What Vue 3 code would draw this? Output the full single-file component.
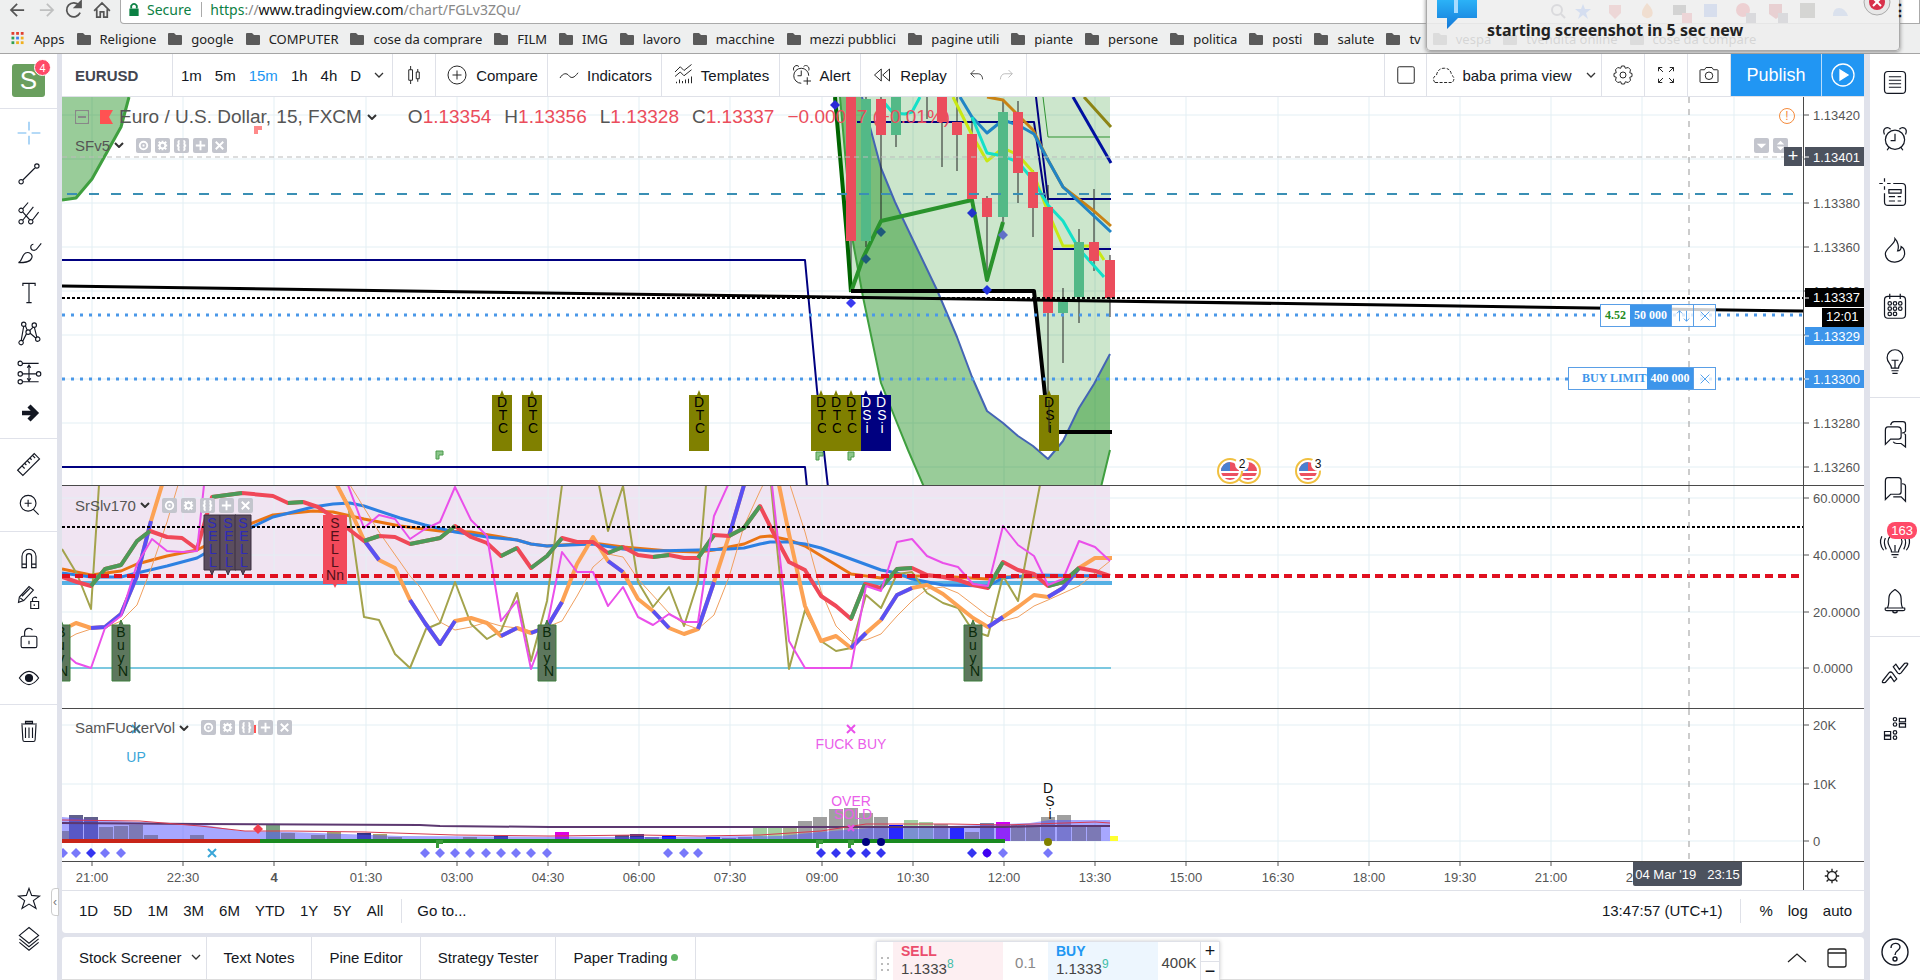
<script setup>
const c = (x, y, r) => `M${x - r} ${y}a${r} ${r} 0 1 0 ${2 * r} 0a${r} ${r} 0 1 0 ${-2 * r} 0`

const icons = {
  back: 'M23 16H8M15 9l-7 7 7 7',
  forward: 'M9 16h15M17 9l7 7-7 7',
  home: 'M7 17l9-9 9 9M10 15v9h4v-6h4v6h4v-9',
  candles: 'M9 9h5v14H9zM11.5 4v5M11.5 23v5M19 12h4v9h-4zM21 8v4M21 21v4',
  compare: c(16, 16, 12) + 'M16 10v12M10 16h12',
  wave: 'M4 20c4-7 9-7 12-3s7 3 12-4',
  templates: 'M4 12l7-7 5 5 10-8M4 18l7-6 5 5 10-8M6 27v-2M10 27v-5M14 27v-3M18 27v-5M22 27v-6M26 27v-9',
  alert: 'M15 27a10 10 0 1 1 10-10M15 10v7h-5M5 10c-2-5 4-9 7-5M25 10c2-5-4-9-7-5M23 19v10M18 24h10',
  replay: 'M15 8v16l-9-8zM26 8v16l-9-8z',
  undo: 'M12 8l-6 6 6 6M6 14h12c4 0 7 4 7 9',
  redo: 'M20 8l6 6-6 6M26 14H14c-4 0-7 4-7 9',
  square: 'M7 5h18a2 2 0 0 1 2 2v18a2 2 0 0 1-2 2H7a2 2 0 0 1-2-2V7a2 2 0 0 1 2-2z',
  gear: 'M14 4h4l1 3 4-1 3 3-1 4 3 1v4l-3 1 1 4-3 3-4-1-1 3h-4l-1-3-4 1-3-3 1-4-3-1v-4l3-1-1-4 3-3 4 1z' + c(16, 16, 4),
  expand: 'M12 12L6 6M6 11V6h5M20 12l6-6M21 6h5v5M12 20l-6 6M6 21v5h5M20 20l6 6M26 21v5h-5',
  camera: 'M5 9h5l2-3h8l2 3h5q1 0 1 1v15q0 1-1 1H5q-1 0-1-1V10q0-1 1-1z' + c(16, 17, 5),
  play: c(16, 16, 11),
  trend: c(7, 26, 2.5) + c(25, 8, 2.5) + 'M9 24L23 10',
  pitchfork: c(7, 13, 2.5) + c(7, 26, 2.5) + c(18, 26, 2.5) + 'M9 11l6-7M9 24L21 9M20 24l7-9M9 15l8 9',
  brush: 'M4 27c5-2 3-8 8-11 4-2 9 2 7 6-2 5-9 5-15 5zM18 9c0 4 5 6 8 1l4-5M18 9c0-2 2-3 3-3',
  text: 'M9 8V5h14v3M16 5v22M13 27h6',
  pattern: c(10, 6, 2.5) + c(22, 7, 2.5) + c(15, 15, 2.5) + c(7, 27, 2.5) + c(26, 23, 2.5) + 'M10 8L7 25M12 8l2 5M21 9l-4 4M13 17l-4 8M17 16l7 6M22 9l3 12',
  forecast: c(6, 5, 2.5) + c(6, 17, 2.5) + c(27, 17, 2.5) + c(6, 26, 2.5) + 'M8 5h19M8 17h17M8 26h19M16 8v15M14 10l2-3 2 3M14 22l2 3 2-3',
  ruler: 'M3 22L22 3l6 6L9 28zM8 17l3 3M11 14l2 2M14 11l3 3M17 8l2 2M20 5l3 3',
  zoom: c(15, 14, 9) + 'M21 21l6 6M15 10v8M11 14h8',
  magnet: 'M8 27V14a8 8 0 0 1 16 0v13h-5V14a3 3 0 0 0-6 0v13zM8 23h5M19 23h5',
  pencil: 'M4 21l1-6L16 3l5 4-11 12zM6 16l4 3M8 14l9-9M18 20h9v8h-9zM20 20v-3a3 3 0 0 1 5-1M22 23v2',
  lock: 'M9 14h14q2 0 2 2v9q0 2-2 2H9q-2 0-2-2v-9q0-2 2-2zM11 14V9a5 5 0 0 1 9-2M16 19v4',
  eye: 'M5 16q11-15 22 0q-11 15-22 0z',
  trash: 'M8 9l1 17q0 2 2 2h10q2 0 2-2l1-17M7 8h18M12 5h8v2h-8zM12 12v12M16 12v12M20 12v12',
  star: 'M16 5l3 8 9 1-7 5 3 9-8-5-8 5 3-9-7-5 9-1z',
  layers: 'M16 4l11 9-11 9-11-9zM5 17l11 9 11-9M5 21l11 9 11-9',
  list: 'M8 4h16q4 0 4 4v17q0 4-4 4H8q-4 0-4-4V8q0-4 4-4zM9 10h14M9 14h14M9 18h14M9 22h14',
  alarm: c(16, 18, 11) + 'M16 11v8h-5M4 12C1 5 7 2 11 6M28 12c3-7-3-10-7-6M9 27l-2 3M23 27l2 3',
  hotlist: 'M14 4h10q4 0 4 4v17q0 4-4 4H8q-4 0-4-4V15M4-2v4M4 7v4M-2 4h4M7 4h4M9 11h14v4H9zM9 19h7M19 19h4M9 24h7M19 24h4',
  fire: 'M16 3c1 6-11 11-11 17 0 14 22 12 22 0 0-4-2-7-4-8 0 3-1 5-4 5 2-5 0-11-3-14z',
  calendar: 'M8 5h16q4 0 4 4v17q0 4-4 4H8q-4 0-4-4V9q0-4 4-4zM10 2v6M22 2v6' + c(10, 13, 2) + c(16, 13, 2) + c(22, 13, 2) + c(10, 19, 2) + c(16, 19, 2) + c(22, 19, 2) + c(10, 25, 2) + c(16, 25, 2),
  bulb: 'M12 23c0-5-5-6-5-12a9 9 0 0 1 18 0c0 6-5 7-5 12zM12 26h8M13 29h6M16 23v-9M12 14h8',
  chats: 'M8 9h11q4 0 4 4v7q0 3-3 3H11l-6 6V13q0-4 3-4zM11 7q1-4 4-4h10q3 0 3 3v8q-1 2-4 2M14 26q1 2 4 2h5l5 4V18q-1-2-4-2',
  chat: 'M8 3h12q3 0 3 3v13q0 3-3 3H11l-6 6V7q0-4 3-4zM14 25h9l5 5V13q0-3-4-3',
  stream: 'M12 24c0-5-4-6-4-12a8 8 0 0 1 16 0c0 6-4 7-4 12zM12 27h8M14 30h4M16 23v-7M5 8c-2 4-1 9 1 13M1 6c-3 6-1 12 2 16M27 8c2 4 1 9-1 13M31 6c3 6 1 12-2 16',
  bell: 'M7 24c2-2 2-6 2-11 0-6 4-8 7-10 3 2 7 4 7 10 0 5 0 9 2 11zM5 24h22q1 3-2 3H7q-3 0-2-3zM13 28q3 3 6 0',
  ideas: 'M2 26l7-9q2-2 4 0l5 7-3 3-4-6-6 7q-5 1-3-2zM30 8l-7 9q-2 2-4 0l-5-7 3-3 4 6 6-7q5-1 3 2z',
  dom: 'M4 20h7v4H4zM4 25h7v4H4zM21 5h7v4h-7zM21 11h7v4h-7z' + c(16, 6, 2) + c(16, 12, 2) + c(16, 21, 2) + c(16, 27, 2),
  help: c(16, 16, 13) + 'M12 12c0-6 9-6 9-1 0 4-5 3-5 8' + c(16, 23, 2),
}

const chips = {
  hide: c(8, 8, 4) + 'M7 8h2',
  settings: c(8, 8, 3) + 'M8 3v2M8 11v2M3 8h2M11 8h2M4 4l2 2M10 10l2 2M12 4l-2 2M6 10l-2 2',
  source: 'M6 3Q4 3 5 6 5 8 3 8q2 0 2 2-1 3 1 3M10 3q2 0 1 3 0 2 2 2-2 0-2 2 1 3-1 3',
  add: 'M8 3v10M3 8h10',
  remove: 'M4 4l8 8M12 4l-8 8',
}

const bookmarks = ['Religione', 'google', 'COMPUTER', 'cose da comprare', 'FILM', 'IMG', 'lavoro', 'macchine', 'mezzi pubblici', 'pagine utili', 'piante', 'persone', 'politica', 'posti', 'salute', 'tv', 'vespa', 'tvendita online', 'cose da compare']
const leftGroups = [['cross', 'trend', 'pitchfork', 'brush', 'text', 'pattern', 'forecast', 'arrow'], ['ruler', 'zoom'], ['magnet', 'pencil', 'lock', 'eye'], ['trash']]
const rightGroups = [['list', 'alarm', 'hotlist', 'fire', 'calendar', 'bulb'], ['chats', 'chat', 'stream', 'bell'], ['ideas', 'dom']]
const ranges = ['1D', '5D', '1M', '3M', '6M', 'YTD', '1Y', '5Y', 'All']
const indicatorLegends = { 1: 'SFv5', 2: 'SrSlv170', 3: 'SamFUckerVol' }

const gridX = Array.from({ length: 19 }, (_, i) => Math.round(92 + i * 91.2))
const hours = ['21:00', '22:30', '4', '01:30', '03:00', '04:30', '06:00', '07:30', '09:00', '10:30', '12:00', '13:30', '15:00', '16:30', '18:00', '19:30', '21:00', '22:30', '']
const gridY = [[115, 159, 203, 247, 291, 335, 379, 423, 467], [499, 556, 613, 669], [725, 784, 841]]

/* x, body top, body bottom, wick top, wick bottom, direction */
const candles = [
  [851, 97, 241, 97, 291, 0], [866, 99, 241, 97, 247, 1], [881, 99, 135, 97, 220, 0], [896, 97, 135, 97, 147, 1], [927, 97, 97, 97, 119, 0],
  [942, 97, 122, 97, 167, 0], [957, 122, 135, 97, 171, 0], [972, 134, 199, 119, 199, 0], [987, 198, 217, 196, 280, 0], [1003, 112, 217, 101, 222, 1],
  [1018, 112, 173, 101, 203, 0], [1033, 172, 208, 170, 237, 0], [1048, 207, 313, 185, 432, 0], [1063, 302, 313, 288, 363, 1], [1079, 242, 297, 229, 323, 1],
  [1094, 242, 261, 189, 271, 0], [1110, 260, 298, 255, 317, 0],
]
const priceDiamonds = [[835, 105, '#2a2ad8'], [866, 259, '#1e5a7a'], [881, 232, '#1e5a7a'], [851, 303, '#3b3bf0'], [972, 213, '#2233cc'], [987, 290, '#2233dd'], [1003, 235, '#6070c8']]
const tags = [[502, 'DTC'], [532, 'DTC'], [699, 'DTC'], [821, 'DTC'], [836, 'DTC'], [866, 'DSi'], [881, 'DSi'], [851, 'DTC'], [1049, 'DSi']]
const tagFill = (x) => (x === 866 || x === 881 ? '#000080' : '#808000')
const tagInk = (x) => (x === 866 || x === 881 ? '#fff' : '#000')

/* Oscillator samples are stored in thirds of a pixel, measured from the section start. */
const at = (x0, list) => {
  const out = []
  for (let i = 0; i < list.length; i += 2) out.push([Math.round(x0 + list[i] / 3), Math.round(480 + list[i + 1] / 3)])
  return out
}
const line = (pts) => pts.map((p) => p.join(',')).join(' ')

const magenta = [
  [...at(0, [186, 515, 228, 553, 274, 566, 316, 447, 364, 410, 410, 255, 455, 181, 502, 217, 545, 219, 592, 217, 612, 18])],
  [...at(0, [1045, 18, 1092, 146, 1138, 108, 1186, 121]), ...at(400, [31, 180, 75, 150, 120, 128, 166, 25, 213, 122, 260, 170, 304, 425, 350, 367, 393, 570, 440, 440, 485, 220, 530, 278, 578, 280, 624, 382, 668, 323, 714, 415, 760, 437, 806, 406, 852, 428, 895, 428, 942, 112, 985, 18])],
  [...at(770, [5, 18, 58, 487, 105, 566, 243, 566, 288, 320, 333, 335, 380, 190, 426, 180, 472, 230, 518, 252, 563, 264, 608, 315, 653, 320, 699, 142, 745, 197, 792, 232, 835, 318, 880, 300, 926, 187, 974, 205, 1020, 245])],
]
const olive = [
  at(0, [186, 210, 230, 285, 274, 390, 297, 18]),
  [...at(0, [1010, 18, 1045, 75, 1092, 415, 1138, 422, 1186, 525, 1230, 566]), ...at(400, [31, 566, 78, 450, 120, 432, 166, 308, 213, 435, 260, 480, 304, 455, 350, 342, 393, 545, 440, 365, 485, 18])],
  at(400, [598, 18, 624, 155, 668, 20, 714, 310, 760, 385, 806, 325, 852, 440, 895, 310, 917, 18]),
  at(770, [2, 18, 58, 570, 105, 392, 152, 485, 198, 517, 243, 508, 288, 347, 333, 388, 380, 285, 426, 278, 472, 342, 518, 372, 563, 388, 608, 455, 653, 470, 699, 292, 745, 365, 810, 18]),
]
const thin = [
  at(0, [186, 490, 228, 465, 274, 450, 316, 448, 364, 425, 410, 378, 455, 260, 500, 130, 535, 18]),
  [...at(0, [1050, 18, 1138, 160, 1230, 290]), ...at(400, [60, 325, 120, 430, 166, 452, 213, 445, 260, 428, 304, 440, 350, 448, 393, 455, 440, 445, 485, 425, 530, 350, 578, 265, 624, 225, 668, 233, 714, 300, 806, 402, 852, 435, 895, 450, 942, 408, 987, 295, 1033, 140, 1080, 35, 1090, 18])],
  at(770, [60, 18, 105, 160, 152, 335, 198, 442, 243, 487, 288, 482, 333, 465, 380, 410, 426, 365, 472, 330, 518, 325, 563, 343, 653, 412, 699, 425, 745, 415, 792, 382, 835, 362, 926, 320, 1020, 245]),
]
const orangeAvg = [...at(0, [186, 270, 274, 288, 364, 277, 410, 255, 500, 230, 592, 213, 727, 145, 820, 108, 940, 97, 1000, 98, 1092, 120, 1200, 142]), ...at(400, [120, 155, 213, 160, 304, 175, 350, 182, 393, 195, 440, 202, 578, 192, 668, 203, 806, 215, 895, 220, 942, 212, 987, 205, 1033, 195, 1080, 175]), ...at(770, [0, 172, 58, 182, 105, 200, 243, 285, 333, 298, 380, 290, 500, 290, 653, 300, 699, 295, 1020, 290])]
const blueAvg = [...at(0, [186, 283, 274, 295, 364, 293, 410, 283, 500, 260, 592, 236, 727, 160, 820, 115, 940, 85, 1000, 76, 1050, 72, 1092, 80]), ...at(400, [0, 118, 75, 138, 166, 158, 260, 175, 350, 183, 393, 195, 440, 202, 578, 196, 668, 210, 760, 215, 895, 213, 987, 210, 1033, 208, 1080, 194]), ...at(770, [0, 190, 58, 190, 105, 195, 152, 207, 333, 272, 380, 283, 426, 300, 518, 318, 653, 322, 699, 297, 792, 287, 1020, 292])]

const fast = [
  at(0, [210, 440, 228, 432, 274, 448, 316, 444, 364, 405, 410, 290, 453, 125, 487, 18]),
  [...at(0, [1012, 18, 1055, 105, 1092, 183, 1138, 243, 1186, 268]), ...at(400, [31, 362, 75, 432, 120, 495, 166, 425, 213, 418, 260, 432, 304, 471, 350, 448, 393, 463, 440, 445, 485, 368, 530, 255, 578, 175, 624, 246, 668, 280, 714, 360, 760, 395, 806, 448, 852, 465, 895, 450, 942, 308, 987, 170, 1033, 18])],
  at(770, [28, 18, 58, 165, 105, 380, 152, 485, 198, 472, 243, 508, 288, 462, 333, 422, 380, 348, 426, 326, 472, 318, 518, 345, 563, 380, 608, 417, 653, 445, 699, 415, 745, 385, 792, 347, 835, 355, 880, 328, 926, 268, 974, 237, 1025, 237]),
]
const fastBlue = [
  fast[0].slice(2, 7), fast[1].slice(2, 4), fast[1].slice(5, 9), fast[1].slice(11, 13), fast[1].slice(13, 16), fast[1].slice(18, 20), fast[1].slice(21, 23), fast[1].slice(24, 26), fast[1].slice(26),
  fast[2].slice(5, 7), fast[2].slice(7, 10), fast[2].slice(14, 16), fast[2].slice(18, 21),
]
const rsi = [...at(0, [186, 293, 230, 308, 274, 320, 316, 270, 364, 257, 410, 187, 450, 155, 502, 175, 545, 178, 592, 210, 635, 55, 727, 42, 820, 52, 865, 72, 910, 68, 955, 85, 1000, 115, 1092, 185, 1138, 171, 1186, 173]), ...at(400, [31, 194, 120, 178, 166, 142, 213, 175, 260, 192, 304, 231, 350, 206, 393, 268, 440, 230, 485, 177, 530, 190, 578, 190, 624, 221, 668, 203, 714, 227, 760, 235, 806, 227, 852, 237, 895, 238, 942, 167, 987, 170, 1033, 148, 1080, 80]), ...at(770, [12, 165, 58, 250, 105, 272, 152, 352, 198, 382, 243, 420, 286, 315, 333, 328, 380, 270, 426, 266, 472, 287, 518, 295, 563, 303, 608, 318, 653, 327, 699, 248, 745, 272, 792, 285, 835, 320, 880, 310, 926, 267, 974, 275, 1020, 290])]
const rsiUp = [[2, 6], [10, 11], [13, 14], [17, 18], [20, 22], [25, 26], [27, 29], [32, 33], [35, 36], [38, 39], [40, 42], [48, 49], [50, 52], [57, 58], [61, 63]].map(([a, b]) => rsi.slice(a, b + 1))

/* left edge, top, fill */
const K = '#a8a36a', G = '#a0a0a0', V = '#8a8aa8', B = '#0000ff', L = '#a5d0a0'
const volume = [
  [55, 831, K], [69, 815, '#60608c'], [84, 817, '#60608c'], [99, 827, K], [114, 826, K], [129, 825, K], [144, 835, K], [190, 835, K], [266, 825, '#78a080'], [281, 833, K], [311, 835, K], [327, 832, K],
  [357, 833, '#303080'], [373, 834, K], [388, 837, K], [463, 837, K], [494, 836, '#303080'], [555, 832, '#e000e0'], [615, 835, '#505080'], [630, 834, '#303090'], [645, 837, V], [662, 836, B], [706, 837, B], [722, 838, V], [738, 837, V],
  [753, 828, L], [768, 827, L], [783, 827, '#a8b890'], [798, 821, G], [813, 817, G], [829, 809, G], [844, 808, G], [859, 813, G], [874, 817, G], [889, 825, B], [904, 820, L], [919, 822, L], [934, 824, G], [950, 826, B],
  [965, 832, K], [980, 823, '#8080a0'], [996, 822, '#d000f0'], [1011, 825, K], [1026, 825, K], [1041, 817, G], [1057, 815, G], [1072, 826, K], [1087, 827, K],
]
const faintMarks = [63, 76, 105, 121, 425, 440, 455, 470, 486, 501, 516, 531, 547, 668, 684, 698, 1003, 1048]
const strongMarks = [91, 821, 836, 851, 866, 881, 972, 987]
const diamond = (x, y) => `M${x} ${y - 5}l5 5-5 5-5-5z`
</script>

<template>
  <div class="app">
    <header class="browser">
      <div class="address">
        <button v-for="n in ['back', 'forward']" :key="n" class="nav" :class="n" :aria-label="n"><svg viewBox="0 0 32 32"><path :d="icons[n]" /></svg></button>
        <button class="nav" aria-label="reload"><svg viewBox="0 0 32 32"><path d="M23 19a8 8 0 1 1-1-8" /><path d="M24 6v7h-7z" class="solid" /></svg></button>
        <button class="nav" aria-label="home"><svg viewBox="0 0 32 32"><path :d="icons.home" /></svg></button>
        <div class="url">
          <svg class="padlock" viewBox="0 0 10 14"><path d="M0 6h10v8H0z" fill="#0b8043" /><path d="M2 6V3q3-4 6 0v3" fill="none" stroke="#0b8043" stroke-width="2" /></svg>
          <span class="secure">Secure</span>
          <a href="#" class="link"><span class="green">https</span><span>://</span><b>www.tradingview.com</b><span>/chart/FGLv3ZQu/</span></a>
        </div>
      </div>
      <nav class="bookmarks">
        <a href="#" class="mark"><svg class="apps" viewBox="0 0 14 14"><g v-for="(row, i) in [['#e04030', '#e04030', '#e04030'], ['#30a050', '#4080f0', '#f0b020'], ['#30a050', '#f0b020', '#f0b020']]" :key="i"><rect v-for="(f, j) in row" :key="j" :x="j * 5" :y="i * 5" width="3" height="3" :fill="f" /></g></svg>Apps</a>
        <a v-for="b in bookmarks" :key="b" href="#" class="mark"><svg viewBox="0 0 14 12"><path d="M0 1q0-1 1-1h5l2 2h5q1 0 1 1v8q0 1-1 1H1q-1 0-1-1z" fill="#5a5a5a" /></svg>{{ b }}</a>
      </nav>
      <div class="notice">
        <svg class="ghost" viewBox="0 0 340 24">
          <g fill="none" stroke="#667" stroke-width="2"><circle cx="10" cy="9" r="5" /><path d="M14 13l4 4" /></g>
          <path d="M36 3l2 5h6l-5 4 2 6-5-4-5 4 2-6-5-4h6z" fill="#4080f0" />
          <path d="M62 4h12v8l-6 6-6-6z" fill="#e05050" /><path d="M100 2q8 8 5 13-6 5-10-1-1-5 5-12z" fill="#f08020" />
          <rect x="126" y="4" width="13" height="10" fill="#333" /><rect x="135" y="12" width="10" height="10" fill="#e04050" />
          <rect x="157" y="3" width="13" height="13" fill="#5080e0" /><circle cx="196" cy="9" r="7" fill="#e02030" /><rect x="199" y="12" width="10" height="10" fill="#667" />
          <path d="M222 3h13v10l-6 5-7-5z" fill="#c02030" /><rect x="231" y="12" width="10" height="10" fill="#667" />
          <rect x="253" y="2" width="15" height="15" fill="#443" /><path d="M286 15q0-8 6-8t9 8z" fill="#6090e0" />
        </svg>
        <svg class="bubble" viewBox="0 0 40 30"><defs><linearGradient id="bub" x2="0" y2="1"><stop stop-color="#2bb2f7" /><stop offset="1" stop-color="#1478d8" /></linearGradient></defs><path d="M0 0h40v18H21L10 29V18H0z" fill="url(#bub)" /><path d="M17 0h4v13h-4z" fill="#a8dcff" /></svg>
        <strong>starting screenshot in 5 sec new</strong>
        <svg class="dismiss" viewBox="0 0 28 16"><circle cx="14" cy="2" r="13" fill="#e8e8e8" stroke="#aaa" /><circle cx="14" cy="2" r="8" fill="#d8304a" /><path d="M10-2l8 8M18-2l-8 8" stroke="#fff" stroke-width="2" /></svg>
      </div>
      <span class="kebab">⋮</span>
    </header>

    <div class="body">
      <aside class="tools">
        <button class="avatar" aria-label="Profile">S<span class="badge">4</span></button>
        <div v-for="(g, i) in leftGroups" :key="i" class="group">
          <button v-for="n in g" :key="n" class="tool" :aria-label="n">
            <svg v-if="n === 'cross'" viewBox="0 0 32 32"><path d="M16 3v10M16 19v10M3 16h10M19 16h10" stroke="#6db6f0" /></svg>
            <svg v-else-if="n === 'arrow'" viewBox="0 0 32 32"><path d="M8 16h14M16 8l8 8-8 8" class="heavy" /></svg>
            <svg v-else viewBox="0 0 32 32"><path :d="icons[n]" /><circle v-if="n === 'eye'" cx="16" cy="16" r="4" fill="#131722" /></svg>
          </button>
        </div>
        <div class="group last">
          <button class="tool" aria-label="star"><svg viewBox="0 0 32 32"><path :d="icons.star" /></svg></button>
          <button class="tool" aria-label="layers"><svg viewBox="0 0 32 32"><path :d="icons.layers" /></svg></button>
        </div>
        <button class="fold" aria-label="Hide toolbar">‹</button>
      </aside>

      <main class="center">
        <div class="toolbar">
          <div class="cell symbol"><button class="sym">EURUSD</button></div>
          <div class="cell intervals">
            <button v-for="t in ['1m', '5m', '15m', '1h', '4h', 'D']" :key="t" :class="{ active: t === '15m' }">{{ t }}</button>
            <button aria-label="More"><svg class="chev" viewBox="0 0 10 6"><path d="M1 1l4 4 4-4" /></svg></button>
          </div>
          <button class="cell slim" aria-label="Candles"><svg viewBox="0 0 32 32"><path :d="icons.candles" /></svg></button>
          <button class="cell compare"><svg viewBox="0 0 32 32"><path :d="icons.compare" /></svg>Compare</button>
          <button class="cell indicators"><svg viewBox="0 0 32 32"><path :d="icons.wave" /></svg>Indicators</button>
          <button class="cell templates"><svg viewBox="0 0 32 32"><path :d="icons.templates" /></svg>Templates</button>
          <button class="cell alert"><svg viewBox="0 0 32 32"><path :d="icons.alert" /></svg>Alert</button>
          <button class="cell replay"><svg viewBox="0 0 32 32"><path :d="icons.replay" /></svg>Replay</button>
          <div class="cell history"><button aria-label="Undo"><svg viewBox="0 0 32 32"><path :d="icons.undo" /></svg></button><button aria-label="Redo" class="off"><svg viewBox="0 0 32 32"><path :d="icons.redo" /></svg></button></div>
          <span class="grow"></span>
          <button class="cell slim" aria-label="Layout"><svg viewBox="0 0 32 32"><path :d="icons.square" /></svg></button>
          <button class="cell view"><svg viewBox="0 0 32 32"><path d="M4 26q-5-6 2-10 2-9 10-9 9 0 10 9 6 4 1 10z" stroke-dasharray="4 2" /></svg>baba prima view<svg class="chev" viewBox="0 0 10 6"><path d="M1 1l4 4 4-4" /></svg></button>
          <button v-for="n in ['gear', 'expand', 'camera']" :key="n" class="cell slim" :aria-label="n"><svg viewBox="0 0 32 32"><path :d="icons[n]" /></svg></button>
          <button class="publish">Publish</button>
          <button class="go" aria-label="Play"><svg viewBox="0 0 32 32"><path :d="icons.play" /><path d="M13 11l8 5-8 5z" class="fill" /></svg></button>
        </div>

        <section class="pane p1">
          <svg class="plot">
            <g transform="translate(-62 -97)">
              <g class="grid"><path v-for="x in gridX" :key="x" :d="`M${x} 97V490`" /><path v-for="y in gridY[0]" :key="y" :d="`M62 ${y}H4000`" /></g>
              <path d="M62 97H129L121 127 92 179 76 198 62 200z" fill="rgba(0,128,0,.4)" />
              <path d="M129 97L121 127 92 179 76 198 62 200" class="ln" stroke="#3f9f3f" stroke-width="3" />
              <path d="M835 97L851 291H1034L1048 432H1110V97z" fill="rgba(0,128,0,.2)" />
              <path d="M862 97L870 127 881 168 895 202 902 217 913 240 937 290 957 337 972 377 987 411 1003 423 1018 436 1033 446 1048 459 1063 441 1079 408 1094 384 1110 354V450L1101 487H924L908 450 895 418 881 383 863 297 853 242 840 97z" fill="rgba(0,128,0,.4)" />
              <g class="ln">
                <path d="M862 97L870 127 881 168 895 202 902 217 913 240 937 290 957 337 972 377 987 411 1003 423 1018 436 1033 446 1048 459 1063 441 1079 408 1094 384 1110 354" stroke="#4464b4" stroke-width="2" />
                <path d="M840 97L853 242 863 297 881 383 895 418 908 450 924 487M1101 487L1110 450" stroke="#3f9f3f" stroke-width="2" />
                <path d="M62 260H805L817 390 828 487M62 467H805L807 487M857 122H1034L1046 205M1036 97L1048 199H1111M1048 249H1111" stroke="#000080" stroke-width="2" />
                <path d="M1043 97L1048 137H1110" stroke="#2e9330" />
                <path d="M1073 97L1111 163" stroke="#0010a0" stroke-width="3" /><path d="M1084 97L1111 127" stroke="#8c8414" stroke-width="3" />
              </g>
              <path v-for="k in candles" :key="k[0]" :d="`M${k[0]} ${k[3]}V${k[4]}`" stroke="#222" />
              <g class="ln" stroke-width="3">
                <path d="M987 97L1003 100 1033 130 1048 160 1063 187 1094 211 1111 226" stroke="#c88214" />
                <path d="M960 97L972 117 987 133 1003 120 1018 125 1034 134 1048 160 1063 187 1111 232" stroke="#2185c5" />
                <path d="M953 97L972 135 987 161 1003 148 1018 155 1033 172 1048 212 1063 246 1095 246 1104 260" stroke="#c8e814" />
                <path d="M882 100L893 113 905 114 912 112 920 97M972 117L987 153 1003 156 1018 162 1033 180 1048 205 1063 221 1079 249 1104 277" stroke="#14e0c8" />
                <path d="M835 97L847 237 851 292" stroke="#006400" stroke-width="4" />
                <path d="M851 292L863 258 881 221 972 200 987 280 1003 222" stroke="#2a932c" stroke-width="4" />
                <path d="M851 291H1034L1045 395M1058 432H1112" stroke="#000" stroke-width="4" />
              </g>
              <rect v-for="k in candles" :key="k[0]" :x="k[0] - 5" :y="k[1]" width="10" :height="k[2] - k[1]" :fill="k[5] ? '#53b987' : '#eb4d5c'" />
              <path v-for="d in priceDiamonds" :key="d[0]" :d="diamond(d[0], d[1])" :fill="d[2]" />
              <path d="M62 286L1803 311" class="ln" stroke="#000" stroke-width="3" />
              <path d="M62 298H4000" stroke="#000" stroke-width="2" stroke-dasharray="3 2" />
              <path d="M62 315H4000M62 379H4000" stroke="#4a98e8" stroke-width="3" stroke-dasharray="3 6" />
              <path d="M67 194H1795" stroke="#3a8fb4" stroke-width="2" stroke-dasharray="10 12" />
              <path d="M62 157H4000" stroke="#bbb" stroke-dasharray="5 4" />
              <path d="M1689 97V490" stroke="#999" stroke-dasharray="6 6" />
              <g v-for="t in tags" :key="t[0]" :fill="tagInk(t[0])" class="glyphs">
                <path :d="`M${t[0] - 10} 395h8l2-5 2 5h8v56h-20z`" :fill="tagFill(t[0])" />
                <text v-for="(ch, i) in t[1]" :key="i" :x="t[0] + (i ? 1 : 0)" :y="407 + i * 13">{{ ch }}</text>
              </g>
              <path d="M1049 400V432" stroke="#222" />
              <g fill="#8cc68c" stroke="#4a9a4a"><path d="M436 451h7v4h-4v4h-3zM816 452h7v4h-4v4h-3zM848 452h6v5h-3v3h-3z" /></g>
              <path d="M254 126h8v4h-4v4h-4z" fill="#ff8a8a" />
              <g v-for="f in [1248, 1230, 1308]" :key="f">
                <circle :cx="f" cy="471" r="12" fill="#fff" stroke="#f0c040" stroke-width="2" /><circle :cx="f" cy="471" r="9" fill="#ec5060" /><path :d="`M${f - 9} 472h18M${f - 7} 477h14`" stroke="#fff" stroke-width="2" /><path :d="`M${f - 9} 471a9 9 0 0 1 9-9v9z`" fill="#4a80d0" />
              </g>
              <g class="count"><circle cx="1242" cy="464" r="7" fill="#fff" /><circle cx="1318" cy="464" r="7" fill="#fff" /><text x="1242" y="468">2</text><text x="1318" y="468">3</text></g>
            </g>
          </svg>
          <div class="quote">
            <svg class="box" viewBox="0 0 14 14"><rect x="0" y="0" width="14" height="14" rx="2" fill="none" stroke="#888" stroke-width="2" /><path d="M3 7h8" stroke="#888" stroke-width="2" /></svg>
            <svg class="flag" viewBox="0 0 13 14"><path d="M0 0h13l-4 7 4 7H0z" fill="#ff5252" /></svg>
            <span>Euro / U.S. Dollar, 15, FXCM</span>
            <svg class="chev" viewBox="0 0 10 6"><path d="M1 1l4 4 4-4" stroke-width="2" /></svg>
            <span class="ohlc">O<i>1.13354</i></span><span class="ohlc">H<i>1.13356</i></span><span class="ohlc">L<i>1.13328</i></span><span class="ohlc">C<i>1.13337</i></span><span class="ohlc"><i>−0.00017 (−0.01%)</i></span>
          </div>
          <div class="study first">
            <span>{{ indicatorLegends[1] }}</span><svg class="chev" viewBox="0 0 10 6"><path d="M1 1l4 4 4-4" stroke-width="2" /></svg>
            <div class="chips"><button v-for="(d, n) in chips" :key="n" :aria-label="n"><svg viewBox="0 0 16 16"><path :d="d" /></svg></button></div>
          </div>
          <div class="chips side"><button aria-label="Move"><svg viewBox="0 0 16 16"><path d="M3 6h10l-5 5z" class="full" /></svg></button><button aria-label="Resize"><svg viewBox="0 0 16 16"><path d="M4 7l4-4 4 4zM4 9l4 4 4-4z" class="full" /></svg></button></div>
          <span class="warn">!</span><span class="plus">+</span>
          <div class="order one"><span class="gain">4.52</span><b>50 000</b><button aria-label="Reverse"><svg viewBox="0 0 16 16"><path d="M4 14V2M1 5l3-3 3 3M12 2v12M9 11l3 3 3-3" /></svg></button><button aria-label="Close"><svg viewBox="0 0 16 16"><path d="M3 3l10 10M13 3L3 13" /></svg></button></div>
          <div class="order two"><span class="kind">BUY LIMIT</span><b>400 000</b><button aria-label="Cancel"><svg viewBox="0 0 16 16"><path d="M3 3l10 10M13 3L3 13" /></svg></button></div>
          <svg class="axis">
            <g transform="translate(-1803 -97)">
              <path v-for="y in gridY[0]" :key="y" :d="`M1803 ${y}h5`" stroke="#555" />
              <text v-for="(y, i) in gridY[0]" v-show="![1, 5, 6].includes(i)" :key="y" x="1812" :y="y + 5">{{ (1.1342 - i * 0.0002).toFixed(5) }}</text>
              <path d="M1804 147h59v19h-59z" fill="#4c525e" /><path d="M1804 288h59v19h-59zM1821 308h42v19h-42z" fill="#000" /><path d="M1804 327h59v18h-59zM1804 370h59v18h-59z" fill="#3d95ea" />
              <path d="M1804 157h4M1804 298h4M1804 336h4M1804 379h4" stroke="#fff" />
              <g class="inv"><text x="1812" y="162">1.13401</text><text x="1812" y="302">1.13337</text><text x="1825" y="321">12:01</text><text x="1812" y="341">1.13329</text><text x="1812" y="384">1.13300</text></g>
            </g>
          </svg>
        </section>

        <section class="pane p2">
          <svg class="plot">
            <g transform="translate(-62 -487)">
              <path d="M62 487H1110V584H62z" fill="#f0e4f2" />
              <g class="grid"><path v-for="x in gridX" :key="x" :d="`M${x} 487V710`" /><path v-for="y in gridY[1]" :key="y" :d="`M62 ${y}H4000`" /></g>
              <path d="M62 584H1112" stroke="#55b0e4" stroke-width="4" /><path d="M62 669H1111" stroke="#7cc8e0" stroke-width="2" />
              <g class="ln">
                <polyline :points="line(orangeAvg)" stroke="#ea7414" stroke-width="3" /><polyline :points="line(blueAvg)" stroke="#2e80e2" stroke-width="3" />
                <polyline v-for="(s, i) in thin" :key="i" :points="line(s)" stroke="#f0a060" />
                <polyline v-for="(s, i) in olive" :key="i" :points="line(s)" stroke="#a3a34c" stroke-width="2" />
                <polyline v-for="(s, i) in fast" :key="i" :points="line(s)" stroke="#fca254" stroke-width="4" />
                <polyline v-for="(s, i) in fastBlue" :key="i" :points="line(s)" stroke="#5a50f4" stroke-width="4" />
                <polyline :points="line(rsi)" stroke="#f04858" stroke-width="4" /><polyline v-for="(s, i) in rsiUp" :key="i" :points="line(s)" stroke="#4c9a58" stroke-width="4" />
                <polyline v-for="(s, i) in magenta" :key="i" :points="line(s)" stroke="#ea50ea" stroke-width="2" />
              </g>
              <path d="M62 528H4000" stroke="#000" stroke-width="2" stroke-dasharray="3 2" />
              <path d="M62 577H4000" stroke="#e01020" stroke-width="4" stroke-dasharray="8 5" />
              <path d="M1689 487V710" stroke="#999" stroke-dasharray="6 6" />
              <g v-for="x in [212, 228, 243]" :key="x" class="glyphs" fill="#2e2ab8"><path :d="`M${x - 8} 516h16v55h-6l-2 5-2-5h-6z`" fill="#5b4d5f" stroke="#3c3040" /><text v-for="(ch, i) in 'SELL'" :key="i" :x="x + (i ? 1 : 0)" :y="529 + i * 13">{{ ch }}</text></g>
              <g class="glyphs" fill="#501018"><path d="M323 516h24v69h-10l-2 4-2-4h-10z" fill="#f2495a" /><text v-for="(ch, i) in ['S', 'E', 'L', 'L', 'Nn']" :key="i" x="335" :y="529 + i * 13">{{ ch }}</text></g>
              <g v-for="x in [61, 121, 547, 973]" :key="x" class="glyphs" fill="#0a2a0a"><path :d="`M${x - 9} 626h7l2-5 2 5h7v56h-18z`" fill="#5d775d" stroke="#3c7f3c" /><text v-for="(ch, i) in 'BuyN'" :key="i" :x="x + (i === 3 ? 2 : 0)" :y="638 + i * 13">{{ ch }}</text></g>
            </g>
          </svg>
          <div class="study"><span>{{ indicatorLegends[2] }}</span><svg class="chev" viewBox="0 0 10 6"><path d="M1 1l4 4 4-4" stroke-width="2" /></svg><div class="chips"><button v-for="(d, n) in chips" :key="n" :aria-label="n"><svg viewBox="0 0 16 16"><path :d="d" /></svg></button></div></div>
          <svg class="axis"><g transform="translate(-1803 -487)"><path v-for="y in gridY[1]" :key="y" :d="`M1803 ${y}h5`" stroke="#555" /><text v-for="(y, i) in gridY[1]" :key="y" x="1812" :y="y + 5">{{ (60 - i * 20).toFixed(4) }}</text></g></svg>
        </section>

        <section class="pane p3">
          <svg class="plot">
            <g transform="translate(-62 -709)">
              <g class="grid"><path v-for="x in gridX" :key="x" :d="`M${x} 709V865`" /><path v-for="y in gridY[2]" :key="y" :d="`M62 ${y}H4000`" /></g>
              <rect v-for="v in volume" :key="v[0]" :x="v[0]" :y="v[1]" width="14" :height="841 - v[1]" :fill="v[2]" />
              <path d="M62 817L97 820 205 825 240 831 290 832 400 836 640 837 780 836 820 832 870 828 950 826 1030 823 1050 820H1110V841H62z" fill="rgba(80,80,255,.5)" />
              <rect x="1110" y="836" width="8" height="5" fill="#ffff30" />
              <g class="ln">
                <path d="M62 823L200 824 420 825 440 826 550 827 690 827 900 827 1004 827 1040 826 1110 826" stroke="#5c3870" stroke-width="2" />
                <path d="M62 820L140 821 200 826 245 831 290 831 365 832 455 835 550 836 640 835 700 836 760 835 821 831 866 824 950 824 1004 825 1095 822 1110 823" stroke="#d83a50" />
                <path d="M62 841H260" stroke="#c82418" stroke-width="4" /><path d="M260 841H1005" stroke="#1a8a20" stroke-width="4" />
              </g>
              <path v-for="x in faintMarks" :key="x" :d="diamond(x, 853)" fill="#7878fa" /><path v-for="x in strongMarks" :key="x" :d="diamond(x, 853)" fill="#3434f0" />
              <circle cx="987" cy="853" r="4" fill="#4000f0" /><circle cx="866" cy="842" r="4" fill="#000080" /><circle cx="881" cy="842" r="4" fill="#000080" /><circle cx="1048" cy="842" r="4" fill="#808000" />
              <path :d="diamond(258, 829)" fill="#f04050" /><path d="M436 840h7v4h-4v4h-3zM816 840h7v4h-4v4h-3zM848 840h6v5h-3v3h-3z" fill="#3a9a3a" />
              <g class="ln" stroke-width="2"><path d="M208 849l8 8M216 849l-8 8M132 725l8 8M140 725l-8 8" stroke="#3aa6d8" /><path d="M847 725l8 8M855 725l-8 8M848 825l6 6M854 825l-6 6" stroke="#ea50ea" /></g>
              <path d="M255 725v8" stroke="#ff5252" stroke-width="2" />
              <path d="M1689 709V865" stroke="#999" stroke-dasharray="6 6" />
              <g class="glyphs"><text x="136" y="762" fill="#3aa6d8">UP</text><g fill="#ea60ea"><text x="851" y="749">FUCK BUY</text><text x="851" y="806">OVER</text><text x="853" y="819">SOLD</text></g><g fill="#111"><text x="1048" y="793">D</text><text x="1050" y="806">S</text><text x="1050" y="819">i</text></g></g>
            </g>
          </svg>
          <div class="study"><span>{{ indicatorLegends[3] }}</span><svg class="chev" viewBox="0 0 10 6"><path d="M1 1l4 4 4-4" stroke-width="2" /></svg><div class="chips"><button v-for="(d, n) in chips" :key="n" :aria-label="n"><svg viewBox="0 0 16 16"><path :d="d" /></svg></button></div></div>
          <svg class="axis"><g transform="translate(-1803 -709)"><path v-for="y in gridY[2]" :key="y" :d="`M1803 ${y}h5`" stroke="#555" /><text v-for="(y, i) in gridY[2]" :key="y" x="1812" :y="y + 5">{{ ['20K', '10K', '0'][i] }}</text></g></svg>
        </section>

        <div class="time">
          <svg class="plot"><g transform="translate(-62 -862)"><g v-for="(x, i) in gridX" :key="x" class="hour"><path v-if="hours[i]" :d="`M${x} 862v4`" stroke="#555" /><text :x="x" y="882" :class="{ strong: hours[i] === '4' }">{{ hours[i] }}</text></g></g></svg>
          <span class="stamp">04 Mar '19&nbsp;&nbsp; 23:15</span>
          <button class="corner" aria-label="Axis settings"><svg viewBox="0 0 20 20"><circle cx="10" cy="10" r="5" /><path d="M10 2v3M10 15v3M2 10h3M15 10h3M4 4l3 3M13 13l3 3M16 4l-3 3M7 13l-3 3" /></svg></button>
        </div>

        <div class="ranges">
          <button v-for="r in ranges" :key="r">{{ r }}</button><span class="bar"></span><button>Go to...</button>
          <span class="grow"></span><span>13:47:57 (UTC+1)</span><span class="bar end"></span><button>%</button><button>log</button><button>auto</button>
        </div>

        <footer class="tabs">
          <button class="screener">Stock Screener<svg class="chev" viewBox="0 0 10 6"><path d="M1 1l4 4 4-4" /></svg></button><button>Text Notes</button><button>Pine Editor</button><button>Strategy Tester</button><button>Paper Trading<i class="dot"></i></button>
          <span class="grow"></span>
          <button class="ico" aria-label="Open panel"><svg viewBox="0 0 20 20"><path d="M1 14l9-8 9 8" /></svg></button><button class="ico" aria-label="Maximize"><svg viewBox="0 0 20 20"><path d="M3 1h14q2 0 2 2v14q0 2-2 2H3q-2 0-2-2V3q0-2 2-2zM1 5h18" /></svg></button>
          <div class="trade">
            <svg class="grip" viewBox="0 0 16 38"><path v-for="y in [16, 22, 28]" :key="y" :d="`M4 ${y}h2M10 ${y}h2`" stroke="#bbb" stroke-width="2" /></svg>
            <button class="sell"><b>SELL</b><span>1.1333<sup>8</sup></span></button>
            <span class="spread">0.1</span>
            <button class="buy"><b>BUY</b><span>1.1333<sup>9</sup></span></button>
            <input aria-label="Quantity" value="400K" />
            <div class="step"><button>+</button><button>−</button></div>
          </div>
        </footer>
      </main>

      <aside class="widgets">
        <div v-for="(g, i) in rightGroups" :key="i" class="set">
          <button v-for="n in g" :key="n" class="widget" :aria-label="n"><svg viewBox="0 0 32 32"><path :d="icons[n]" /></svg><span v-if="n === 'stream'" class="news">163</span></button>
        </div>
        <button class="widget end" aria-label="help"><svg viewBox="0 0 32 32"><path :d="icons.help" /></svg></button>
      </aside>
    </div>
  </div>
</template>

<style>
body { margin: 0; overflow: hidden; }
</style>

<style scoped>
.app { display: flex; flex-direction: column; height: 100vh; font: 15px "Liberation Sans", Arial, sans-serif; color: #131722; background: #e0e2eb; }
* { box-sizing: border-box; }
button { border: 0; background: none; padding: 0; margin: 0; font: inherit; color: inherit; display: flex; align-items: center; justify-content: center; }
svg { fill: none; overflow: hidden; display: block; flex: none; }
a { color: inherit; text-decoration: none; }
i { font-style: normal; }
.grow { flex: 1; }

.browser { position: relative; font-family: "Noto Sans", sans-serif; background: #eeefef; overflow: hidden; flex: none; }
.address { display: flex; height: 24px; align-items: center; padding-left: 4px; }
.nav { width: 28px; height: 24px; }
.nav svg { width: 28px; height: 28px; stroke: #555; stroke-width: 2; margin-top: -4px; }
.nav.forward { opacity: .3; }
.nav .solid { fill: #555; }
.url { flex: 1; height: 24px; margin-left: 4px; background: #fff; border: 1px solid #aaa; border-top: 0; border-radius: 0 0 0 4px; display: flex; align-items: center; padding: 0 0 4px 8px; font-size: 14px; }
.padlock { width: 10px; height: 13px; }
.secure { color: #0b8043; margin-left: 8px; padding-right: 10px; border-right: 1px solid #aaa; line-height: 15px; }
.link { margin-left: 8px; color: #888; }
.link b { font-weight: 400; color: #111; }
.link .green { color: #0b8043; }
.bookmarks { height: 30px; display: flex; align-items: center; gap: 12px; padding-left: 11px; border-bottom: 1px solid #a5a5a5; font-size: 13px; color: #222; white-space: nowrap; overflow: hidden; }
.mark { display: flex; align-items: center; gap: 9px; }
.mark svg { width: 14px; height: 12px; }
.mark .apps { height: 13px; }
.notice { position: absolute; right: 20px; top: -4px; width: 474px; height: 55px; background: rgba(238, 238, 238, .88); border: 1px solid #aaa; border-radius: 0 0 4px 4px; box-shadow: 0 1px 4px #888; display: flex; }
.notice strong { font-size: 16px; color: #222; margin: 22px 0 0 10px; white-space: nowrap; }
.bubble { width: 40px; height: 30px; margin: 3px 0 0 10px; }
.dismiss { position: absolute; right: 8px; top: 3px; width: 28px; height: 16px; }
.ghost { position: absolute; left: 120px; top: 4px; width: 340px; height: 24px; opacity: .15; }
.kebab { position: absolute; right: 12px; top: 0; font-size: 16px; line-height: 20px; font-weight: 700; }

.body { flex: 1; display: flex; min-height: 0; }
.tools { position: relative; width: 57px; margin-right: 5px; background: #fff; display: flex; flex-direction: column; flex: none; }
.avatar { position: relative; width: 33px; height: 33px; margin: 10px 0 11px 12px; background: #6a9f5e; border-radius: 3px; color: #fff; font-size: 26px; flex: none; }
.badge { position: absolute; right: -6px; top: -5px; width: 17px; height: 17px; border-radius: 9px; background: #ff4a68; font-size: 11px; line-height: 16px; border: 1px solid #fff; }
.group { border-top: 1px solid #e0e2ea; padding: 6px 0; }
.avatar + .group { padding: 4px 0 5px; }
.group.last { margin-top: auto; border: 0; padding-bottom: 22px; }
.tool { width: 57px; height: 40px; }
.tool svg { width: 28px; height: 28px; stroke: #131722; stroke-width: 1.3; }
.tool .heavy { stroke-width: 5; }
.fold { position: absolute; right: -2px; bottom: 64px; width: 8px; height: 28px; border: 1px solid #ccc; border-radius: 4px 0 0 4px; background: #fff; font-size: 12px; color: #777; }

.center { flex: 1; min-width: 0; display: flex; flex-direction: column; }
.toolbar { height: 43px; flex: none; display: flex; background: #fff; border-bottom: 1px solid #dfe1e8; white-space: nowrap; overflow: hidden; }
.cell { border-right: 1px solid #dfe1e8; flex: none; }
.toolbar svg { width: 24px; height: 24px; stroke: #222; stroke-width: 1.3; }
.toolbar svg.chev, .chev { width: 10px; height: 6px; stroke: #333; stroke-width: 1.3; }
.symbol { width: 111px; display: flex; padding-left: 13px; font-weight: 700; color: #434651; }
.intervals { width: 220px; display: flex; padding-left: 8px; gap: 13px; align-items: center; }
.active { color: #2196f3; }
.slim { width: 43px; }
.compare { width: 112px; gap: 7px; }
.indicators { width: 114px; gap: 6px; }
.templates { width: 118px; gap: 5px; }
.alert { width: 81px; gap: 6px; }
.replay { width: 96px; gap: 6px; }
.history { width: 70px; display: flex; justify-content: space-evenly; }
.history svg { width: 20px; height: 20px; }
.off { opacity: .35; }
.grow + .slim { border-left: 1px solid #dfe1e8; }
.view { width: 175px; gap: 6px; }
.view .chev { margin-left: 8px; }
.publish { width: 91px; background: #2196f3; color: #fff; font-size: 18px; border-right: 1px solid #b9dcfa; flex: none; }
.go { width: 42px; background: #2196f3; flex: none; }
.toolbar .go svg { stroke: #fff; width: 32px; height: 32px; }
.go .fill { fill: #fff; }

.pane { position: relative; display: flex; background: #fff; border-bottom: 1px solid #4a4a4a; min-height: 0; }
.p1 { flex: 390 1 0; }
.p2 { flex: 222 1 0; }
.p3 { flex: 153 1 0; }
.plot { flex: 1; width: 0; height: 100%; }
.axis { width: 61px; height: 100%; border-left: 1px solid #4a4a4a; font-size: 13px; }
.axis text { fill: #555; }
.axis .inv text { fill: #fff; }
.grid { stroke: #e3eff4; }
.ln { fill: none; stroke-linejoin: round; }
.glyphs { font-size: 14px; text-anchor: middle; }
.count { font-size: 12px; text-anchor: middle; }
.count text { fill: #111; }
.quote { position: absolute; left: 13px; top: 8px; height: 24px; display: flex; align-items: center; font-size: 19px; color: #555; white-space: nowrap; }
.quote .box { width: 14px; height: 14px; }
.quote .flag { width: 13px; height: 14px; margin: 0 6px 0 11px; }
.quote .chev { margin: 0 18px 0 5px; }
.ohlc { margin-left: 13px; }
.ohlc i { color: #eb4d5c; }
.study { position: absolute; left: 13px; top: 9px; height: 20px; display: flex; align-items: center; gap: 4px; font-size: 15px; color: #555; }
.study.first { top: 38px; }
.chips { display: flex; gap: 4px; margin-left: 8px; }
.chips button { width: 15px; height: 15px; background: #c3c5cd; border-radius: 2px; }
.chips svg { width: 15px; height: 15px; stroke: #fff; stroke-width: 2; }
.chips .full { fill: #fff; stroke: none; }
.side { position: absolute; right: 76px; top: 41px; }
.warn { position: absolute; right: 69px; top: 11px; width: 16px; height: 16px; border: 1px solid #f58b3c; border-radius: 8px; color: #f58b3c; font-size: 12px; line-height: 14px; text-align: center; }
.plus { position: absolute; right: 62px; top: 50px; width: 18px; height: 19px; background: #4c525e; color: #fff; font-size: 18px; line-height: 18px; text-align: center; }
.order { position: absolute; right: 148px; height: 23px; display: flex; align-items: stretch; border: 1px solid #5a9fe6; background: rgba(255, 255, 255, .8); font: bold 12px "Liberation Serif", serif; color: #3d95ea; line-height: 21px; text-align: center; white-space: nowrap; }
.one { top: 207px; }
.two { top: 270px; }
.order .kind { padding-left: 13px; width: 78px; text-align: left; background: #fff; }
.order .gain { color: #228b22; width: 29px; background: #fff; }
.order b { background: #3d95ea; color: #fff; width: 41px; }
.two b { width: 46px; }
.order button { width: 22px; border-left: 1px solid #5a9fe6; }
.order svg { width: 14px; height: 14px; stroke: #3d95ea; }

.time { position: relative; height: 29px; flex: none; display: flex; background: #fff; border-bottom: 1px solid #dfe1e8; }
.hour text { font-size: 13px; fill: #555; text-anchor: middle; }
.hour .strong { font-weight: 700; }
.stamp { position: absolute; right: 122px; top: 0; width: 109px; height: 24px; background: #4c525e; color: #fff; font-size: 13px; line-height: 25px; text-align: center; border-radius: 0 0 2px 2px; }
.corner { width: 61px; border-left: 1px solid #4a4a4a; padding-right: 4px; }
.corner svg { width: 18px; height: 18px; stroke: #222; stroke-width: 1.5; }
.ranges { height: 42px; flex: none; background: #fff; display: flex; align-items: center; gap: 15px; padding: 0 12px 3px 17px; border-radius: 0 0 4px 4px; white-space: nowrap; }
.bar { width: 1px; height: 24px; background: #dfe1e8; margin-left: 3px; }
.bar.end { margin-right: 3px; }
.tabs { position: relative; height: 43px; flex: none; margin-top: 4px; background: #fff; border-bottom: 1px solid #ddd; display: flex; border-radius: 4px 4px 0 0; white-space: nowrap; }
.tabs > button { padding: 0 17px 2px; border-right: 1px solid #dfe1e8; }
.tabs > .screener { padding: 0 5px 2px 17px; gap: 9px; }
.dot { width: 7px; height: 7px; border-radius: 4px; background: #5fb563; margin-left: 3px; }
.tabs > .ico { border: 0; padding: 0; width: 40px; }
.ico svg { width: 20px; height: 20px; stroke: #222; stroke-width: 1.3; }
.ico:nth-last-child(2) { margin-right: 7px; }
.trade { position: absolute; left: 814px; top: 4px; height: 39px; width: 344px; display: flex; background: #fff; border: 1px solid #dfe1e8; border-bottom: 0; box-shadow: 0 0 4px #ccc; }
.grip { width: 16px; height: 38px; }
.trade .sell, .trade .buy { width: 110px; background: #fdeff2; flex-direction: column; align-items: flex-start; padding: 0 0 2px 8px; line-height: 17px; color: #444; font-size: 15px; }
.trade .buy { background: #edf6fe; }
.trade b { font-size: 14px; color: #eb4d6c; }
.trade .buy b { color: #2196f3; }
sup { color: #42bda8; font-size: 12px; line-height: 1px; }
.spread { width: 45px; text-align: center; line-height: 42px; color: #888; }
.trade input { width: 42px; border: 0; padding: 3px 0 0; text-align: center; font: inherit; color: #444; }
.step { flex: 1; border-left: 1px solid #dfe1e8; display: flex; flex-direction: column; }
.step button { flex: 1; font-size: 18px; line-height: 16px; }
.step button + button { border-top: 1px solid #dfe1e8; }

.widgets { width: 50px; margin-left: 6px; background: #fff; display: flex; flex-direction: column; flex: none; }
.set { border-bottom: 1px solid #dfe1e8; padding: 7px 0; }
.set:first-child { padding: 0 0 7px; }
.set:nth-child(3) { border: 0; }
.widget { position: relative; width: 50px; height: 56px; }
.widget svg { width: 28px; height: 28px; stroke: #131722; stroke-width: 1.4; overflow: visible; }
.widget.end { margin-top: auto; }
.widget.end svg { width: 32px; height: 32px; }
.news { position: absolute; right: 3px; top: 5px; background: #ff4a68; color: #fff; font-size: 13px; line-height: 17px; border-radius: 8px; padding: 0 4px; }
</style>
